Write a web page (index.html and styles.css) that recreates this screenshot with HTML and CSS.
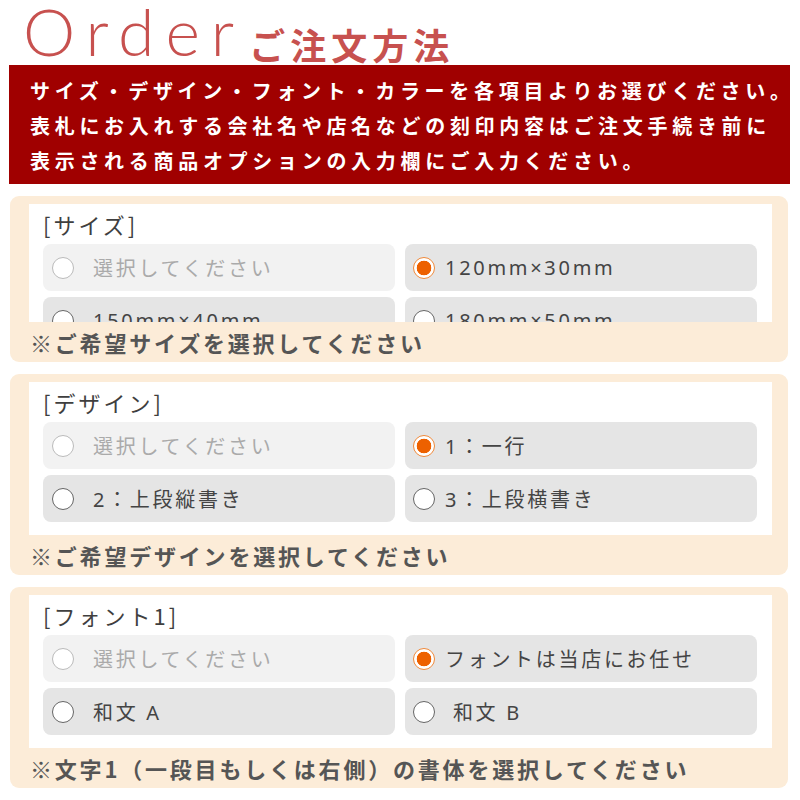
FILE: index.html
```html
<!DOCTYPE html>
<html lang="ja">
<head>
    <meta charset="UTF-8">
    <meta name="viewport" content="width=device-width, initial-scale=1.0">
    <title>ご注文方法</title>
    <link rel="stylesheet" href="styles.css">
</head>
<body>

<div class="page">
    <h1 class="page-title">
        <span class="title-en">Order</span>
        <span class="title-ja">ご注文方法</span>
    </h1>

    <div class="notice">
        サイズ・デザイン・フォント・カラーを各項目よりお選びください。<br>
        表札にお入れする会社名や店名などの刻印内容はご注文手続き前に<br>
        表示される商品オプションの入力欄にご入力ください。
    </div>

    <!-- size -->
    <div class="option-card">
        <div class="option-panel clipped">
            <div class="option-label">[サイズ]</div>
            <div class="option-grid">
                <label class="option placeholder"><input type="radio" name="size"><span>選択してください</span></label>
                <label class="option"><input type="radio" name="size" checked><span>120mm×30mm</span></label>
                <label class="option"><input type="radio" name="size"><span>150mm×40mm</span></label>
                <label class="option"><input type="radio" name="size"><span>180mm×50mm</span></label>
            </div>
        </div>
        <p class="option-note">※ご希望サイズを選択してください</p>
    </div>

    <!-- design -->
    <div class="option-card">
        <div class="option-panel">
            <div class="option-label">[デザイン]</div>
            <div class="option-grid">
                <label class="option placeholder"><input type="radio" name="design"><span>選択してください</span></label>
                <label class="option"><input type="radio" name="design" checked><span>1：一行</span></label>
                <label class="option"><input type="radio" name="design"><span>2：上段縦書き</span></label>
                <label class="option"><input type="radio" name="design"><span>3：上段横書き</span></label>
            </div>
        </div>
        <p class="option-note">※ご希望デザインを選択してください</p>
    </div>

    <!-- font -->
    <div class="option-card">
        <div class="option-panel">
            <div class="option-label">[フォント1]</div>
            <div class="option-grid">
                <label class="option placeholder"><input type="radio" name="font1"><span>選択してください</span></label>
                <label class="option"><input type="radio" name="font1" checked><span>フォントは当店にお任せ</span></label>
                <label class="option"><input type="radio" name="font1"><span>和文 A</span></label>
                <label class="option"><input type="radio" name="font1"><span>&nbsp;和文 B</span></label>
            </div>
        </div>
        <p class="option-note">※文字1（一段目もしくは右側）の書体を選択してください</p>
    </div>
</div>

</body>
</html>
```

FILE: styles.css
```css
body {
    margin: 0;
    background-color: #fff;
    font-family: "Noto Sans CJK JP", "Noto Sans", sans-serif;
    color: #444;
}
.page {
    width: 780px;
    margin: 0 10px;
}
.page-title {
    display: flex;
    align-items: baseline;
    height: 65px;
    margin: 0;
    padding-left: 13px;
    color: #c7514f;
    font-weight: normal;
}
.title-en {
    font-family: "Lato", sans-serif;
    font-weight: 300;
    font-size: 66px;
    line-height: 62px;
    letter-spacing: 11px;
}
.title-ja {
    margin-left: 4px;
    font-size: 36px;
    font-weight: bold;
    letter-spacing: 5px;
    position: relative;
    top: 4px;
}
.notice {
    margin-left: -1px;
    padding: 8px 0 6px 21px;
    background-color: #a00000;
    color: #fff;
    font-size: 20px;
    font-weight: bold;
    line-height: 35px;
    letter-spacing: 4.7px;
    white-space: nowrap;
}
.option-card {
    margin: 12px 2px 0 0;
    padding: 8px 16px 0 19px;
    background-color: #fcecd8;
    border-radius: 9px;
}
.option-panel {
    padding: 6px 15px 13px 14px;
    background-color: #fff;
}
.option-panel.clipped {
    height: 112px;
    padding-bottom: 0;
    overflow: hidden;
}
.option-label {
    height: 34px;
    font-size: 22px;
    line-height: 28px;
    letter-spacing: 3px;
    color: #3f3f3f;
}
.option-grid {
    display: grid;
    grid-template-columns: 1fr 1fr;
    gap: 6px 10px;
}
.option {
    display: flex;
    align-items: center;
    gap: 10px;
    height: 47px;
    padding-left: 8px;
    background-color: #e5e5e5;
    border-radius: 8px;
    font-family: "Noto Sans", "Noto Sans CJK JP", sans-serif;
    font-size: 20px;
    letter-spacing: 2.7px;
    color: #444;
}
.option:nth-child(odd) {
    gap: 19px;
    padding-left: 9px;
}
.option.placeholder {
    background-color: #f2f2f2;
    color: #aaa;
}
.option input[type="radio"] {
    appearance: none;
    flex: none;
    width: 22px;
    height: 22px;
    margin: 0;
    border: 1px solid #666;
    border-radius: 50%;
    background-color: #fff;
}
.option.placeholder input[type="radio"] {
    border-color: #bbb;
}
.option input[type="radio"]:checked {
    border-color: #f08a3c;
    background: radial-gradient(circle, #ed6100 0 7px, #fff 7.6px);
}
.option-note {
    margin: 0 0 0 1px;
    font-size: 22px;
    font-weight: bold;
    line-height: 40px;
    letter-spacing: 2.8px;
    color: #555;
}
```
